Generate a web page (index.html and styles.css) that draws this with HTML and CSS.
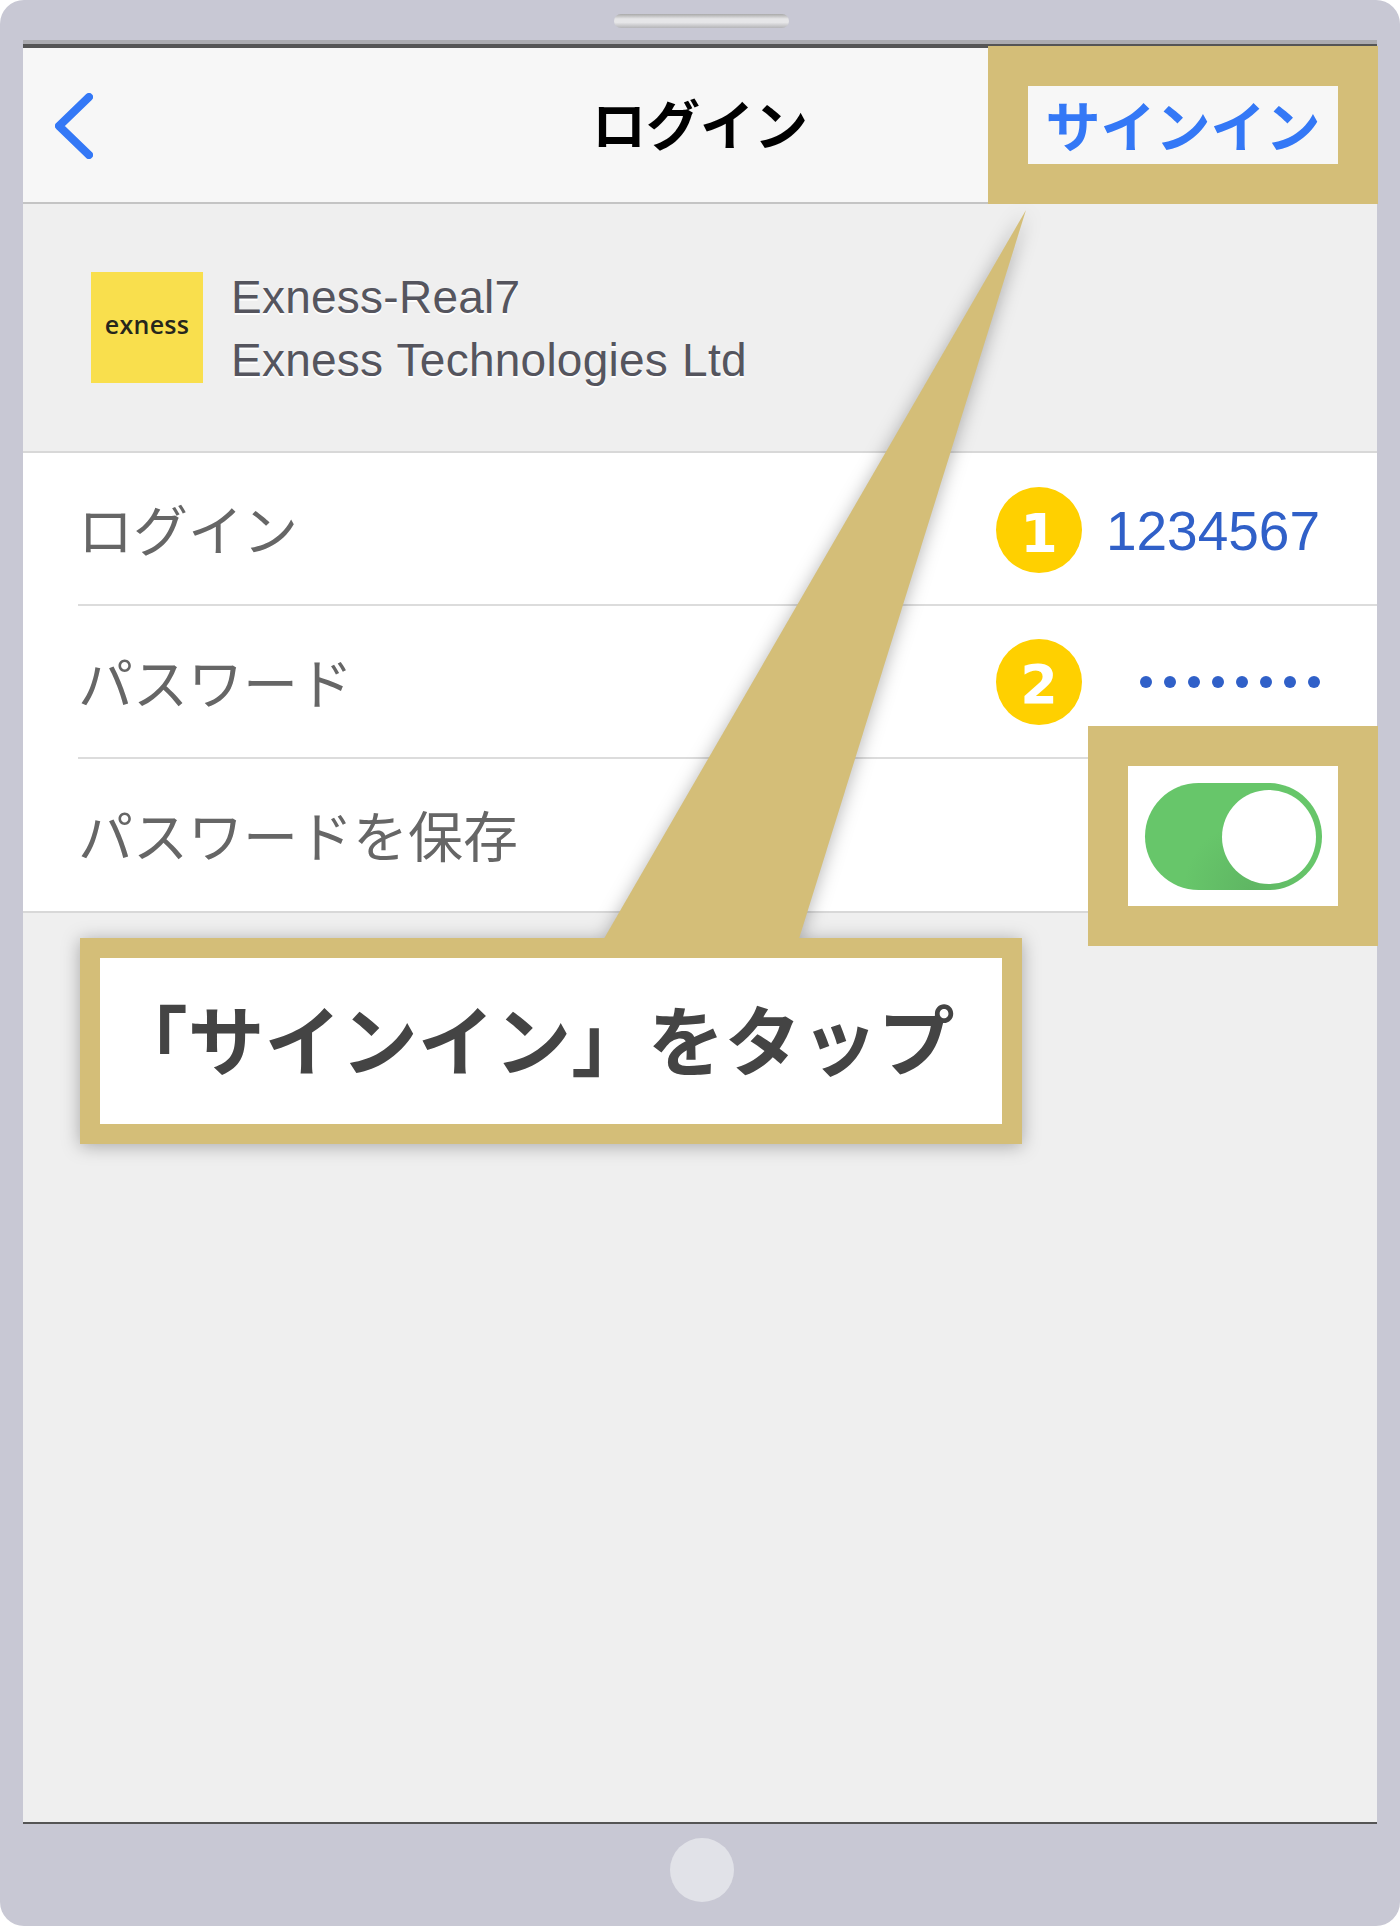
FILE: index.html
```html
<!DOCTYPE html>
<html lang="ja">
<head>
    <meta charset="UTF-8">
    <meta name="viewport" content="width=device-width, initial-scale=1.0">
    <title>ログイン</title>
    <link rel="stylesheet" href="styles.css">
</head>
<body>
    <div class="device">
        <div class="device-top">
            <div class="speaker"></div>
        </div>

        <div class="screen">
            <div class="nav">
                <svg class="back-icon" width="38" height="66" viewBox="0 0 38 66">
                    <path d="M34 4 L4 33 L34 62" fill="none" stroke="#3478f6" stroke-width="8" stroke-linecap="round" stroke-linejoin="round"/>
                </svg>
                <h1 class="nav-title">ログイン</h1>
            </div>

            <div class="server">
                <div class="server-logo">exness</div>
                <div class="server-text">
                    <div>Exness-Real7</div>
                    <div>Exness Technologies Ltd</div>
                </div>
            </div>

            <div class="form">
                <div class="row">
                    <span class="row-label">ログイン</span>
                    <span class="badge badge-first">1</span>
                    <span class="row-value value-first">1234567</span>
                </div>
                <div class="row">
                    <span class="row-label">パスワード</span>
                    <span class="badge">2</span>
                    <span class="row-value">
                        <span class="dots">
                            <i></i><i></i><i></i><i></i><i></i><i></i><i></i><i></i>
                        </span>
                    </span>
                </div>
                <div class="row row-last">
                    <span class="row-label">パスワードを保存</span>
                </div>
            </div>
        </div>

        <div class="device-bottom">
            <div class="home-button"></div>
        </div>

        <!-- highlights over the screenshot -->
        <div class="highlight highlight-signin">
            <div class="signin-text">サインイン</div>
        </div>
        <div class="highlight highlight-switch">
            <div class="switch"><div class="switch-knob"></div></div>
        </div>

        <div class="callout">
            <svg class="callout-tail" width="1400" height="1000" viewBox="0 0 1400 1000">
                <polygon points="1026,210 798,942 602,942" fill="#d4be78"/>
            </svg>
            <div class="callout-box">
                <div class="callout-text">「サインイン」をタップ</div>
            </div>
        </div>
    </div>
</body>
</html>
```

FILE: styles.css
```css
* {
    box-sizing: border-box;
}
body {
    margin: 0;
    background-color: white;
    font-family: "Liberation Sans", "Noto Sans CJK JP", sans-serif;
}
.device {
    position: relative;
    width: 1400px;
    height: 1926px;
    background-color: #c8c8d4;
    border-radius: 24px;
    display: flex;
    flex-direction: column;
    overflow: hidden;
}
.device-top {
    height: 40px;
    padding-top: 14px;
    display: flex;
    justify-content: center;
}
.speaker {
    width: 175px;
    height: 14px;
    margin-left: 3px;
    border-radius: 7px;
    background: linear-gradient(#a9a9a9, #e6e6e8 35%, #e6e6e8 60%, #b5b5b8);
}
.screen {
    height: 1784px;
    margin: 0 23px;
    background-color: #efefef;
    border-top: 4px solid #ababb0;
    border-bottom: 2px solid #555;
}
.nav {
    height: 160px;
    border-top: 4px solid #555;
    border-bottom: 2px solid #c4c4c4;
    background-color: #f7f7f7;
    display: flex;
    align-items: center;
    justify-content: center;
    position: relative;
}
.back-icon {
    position: absolute;
    left: 32px;
    top: 45px;
}
.nav-title {
    margin: 0 0 4px 0;
    font-family: "Noto Sans CJK JP", sans-serif;
    font-size: 54px;
    font-weight: 700;
    color: #000;
    line-height: 1;
}
.server {
    height: 249px;
    padding: 68px 0 0 68px;
    display: flex;
    gap: 28px;
    border-bottom: 2px solid #d8d8d8;
}
.server-logo {
    width: 112px;
    height: 111px;
    padding-bottom: 7px;
    background-color: #f9df4d;
    color: #26261c;
    font-family: "Open Sans", sans-serif;
    font-size: 25px;
    font-weight: 600;
    letter-spacing: 0.3px;
    display: flex;
    align-items: center;
    justify-content: center;
}
.server-text {
    font-size: 46px;
    line-height: 63px;
    letter-spacing: 0.25px;
    word-spacing: 1px;
    color: #55555e;
    text-shadow: 0 2px 0 white;
    margin-top: -6px;
}
.form {
    background-color: white;
    padding-left: 55px;
    border-bottom: 2px solid #d8d8d8;
}
.row {
    height: 153px;
    padding-right: 57px;
    display: flex;
    align-items: center;
    border-bottom: 2px solid #dcdcdc;
}
.row-last {
    height: 152px;
    border-bottom: none;
}
.row-label {
    margin-right: auto;
    margin-bottom: 4px;
    font-family: "Noto Sans CJK JP", sans-serif;
    font-size: 55px;
    font-weight: 400;
    color: #666;
}
.badge {
    width: 86px;
    height: 86px;
    padding-top: 6px;
    border-radius: 50%;
    background-color: #ffd000;
    color: white;
    font-family: "DejaVu Sans", sans-serif;
    font-size: 54px;
    font-weight: 700;
    display: flex;
    align-items: center;
    justify-content: center;
}
.badge-first {
    margin-top: 3px;
}
.row-value {
    width: 213px;
    margin-left: 25px;
    font-size: 55px;
    color: #3060c8;
    display: flex;
    justify-content: flex-end;
}
.value-first {
    margin-top: 4px;
}
.dots {
    display: flex;
    gap: 12px;
}
.dots i {
    width: 12px;
    height: 12px;
    border-radius: 50%;
    background-color: #3060c8;
}
.device-bottom {
    flex: 1;
    display: flex;
    justify-content: center;
    padding-top: 14px;
}
.home-button {
    width: 64px;
    height: 64px;
    margin-left: 4px;
    border-radius: 50%;
    background-color: #e1e2e8;
}
.highlight {
    position: absolute;
    border: 40px solid #d4be78;
    display: flex;
    align-items: center;
    justify-content: center;
}
.highlight-signin {
    left: 988px;
    top: 46px;
    width: 390px;
    height: 158px;
    background-color: #f7f7f7;
}
.signin-text {
    margin-bottom: 4px;
    font-family: "Noto Sans CJK JP", sans-serif;
    font-size: 55px;
    font-weight: 700;
    color: #3478f6;
}
.highlight-switch {
    left: 1088px;
    top: 726px;
    width: 290px;
    height: 220px;
    background-color: white;
}
.switch {
    width: 177px;
    height: 107px;
    border-radius: 54px;
    background: radial-gradient(circle at 60% 100%, #5fb663, #67c66a 45%);
    position: relative;
}
.switch-knob {
    position: absolute;
    right: 6px;
    top: 7px;
    width: 94px;
    height: 94px;
    border-radius: 50%;
    background-color: white;
}
.callout {
    position: absolute;
    left: 0;
    top: 0;
    filter: drop-shadow(0 2px 9px rgba(0,0,0,0.3));
}
.callout-tail {
    display: block;
}
.callout-box {
    position: absolute;
    left: 80px;
    top: 938px;
    width: 942px;
    height: 206px;
    border: 20px solid #d4be78;
    background-color: white;
    display: flex;
    align-items: center;
    padding: 0 0 8px 11px;
}
.callout-text {
    font-family: "Noto Sans CJK JP", sans-serif;
    font-size: 76.7px;
    font-weight: 700;
    color: #444;
    white-space: nowrap;
    line-height: 1;
}
```
